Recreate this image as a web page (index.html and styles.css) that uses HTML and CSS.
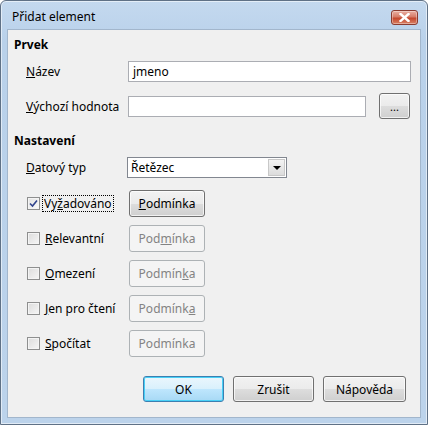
FILE: index.html
```html
<!DOCTYPE html>
<html lang="cs">
<head>
    <meta charset="UTF-8">
    <title>Přidat element</title>
    <link rel="stylesheet" href="styles.css">
</head>
<body>
    <div class="window">
        <div class="titlebar">
            <span class="title">Přidat element</span>
            <span class="close">
                <svg width="11" height="9" viewBox="0 0 11 9">
                    <path d="M1.5 1 L9.5 8 M9.5 1 L1.5 8" stroke="#fff" stroke-width="2.4" stroke-linecap="square"/>
                </svg>
            </span>
        </div>

        <div class="client">
            <div class="section">Prvek</div>
            <div class="row first">
                <label class="lbl"><u>N</u>ázev</label>
                <div class="field wide">jmeno</div>
            </div>
            <div class="row">
                <label class="lbl"><u>V</u>ýchozí hodnota</label>
                <div class="field mid"></div>
                <button class="btn dots">...</button>
            </div>

            <div class="section second">Nastavení</div>
            <div class="row type">
                <label class="lbl"><u>D</u>atový typ</label>
                <div class="select">
                    <span class="value">Řetězec</span>
                    <span class="arrow"></span>
                </div>
            </div>

            <div class="row check">
                <div class="chk-col">
                    <span class="box checked">
                        <svg width="9" height="9" viewBox="0 0 9 9">
                            <path d="M1 4.5 L3.5 7 L8 1.5" fill="none" stroke="#31448d" stroke-width="1.6"/>
                        </svg>
                    </span>
                    <span class="focus">Vy<u>ž</u>adováno</span>
                </div>
                <button class="btn cond"><u>P</u>odmínka</button>
            </div>
            <div class="row check">
                <div class="chk-col">
                    <span class="box"></span>
                    <span class="txt"><u>R</u>elevantní</span>
                </div>
                <button class="btn cond off">Pod<u>m</u>ínka</button>
            </div>
            <div class="row check">
                <div class="chk-col">
                    <span class="box"></span>
                    <span class="txt"><u>O</u>mezení</span>
                </div>
                <button class="btn cond off">Podmín<u>k</u>a</button>
            </div>
            <div class="row check">
                <div class="chk-col">
                    <span class="box"></span>
                    <span class="txt"><u>J</u>en pro čtení</span>
                </div>
                <button class="btn cond off">Podmínk<u>a</u></button>
            </div>
            <div class="row check">
                <div class="chk-col">
                    <span class="box"></span>
                    <span class="txt"><u>S</u>počítat</span>
                </div>
                <button class="btn cond off">Podmínka</button>
            </div>

            <div class="actions">
                <button class="btn action default">OK</button>
                <button class="btn action">Zrušit</button>
                <button class="btn action">Nápověda</button>
            </div>
        </div>
    </div>
</body>
</html>
```

FILE: styles.css
```css
html, body {
    margin: 0;
    padding: 0;
    background: #ffffff;
}
body {
    font: 12px "Noto Sans", "Open Sans", sans-serif;
    color: #000;
}
.window {
    width: 426px;
    height: 423px;
    border: 1px solid #5f7186;
    border-radius: 6px 6px 0 0;
    background: linear-gradient(#c4d9ef, #b9d1ea 40px, #bcd3eb);
    display: flex;
    flex-direction: column;
    box-shadow: inset 0 0 0 1px rgba(255, 255, 255, 0.55);
}
.titlebar {
    height: 28px;
    display: flex;
    align-items: flex-start;
    justify-content: space-between;
    padding: 0 9px 0 11px;
}
.title {
    margin-top: 7px;
    font-size: 12px;
    color: #000;
}
.close {
    width: 25px;
    height: 13px;
    margin-top: 9px;
    border: 1px solid #8a3b30;
    border-radius: 3px;
    background: linear-gradient(#eab0a3, #d67c68 45%, #c4472d 55%, #d98266);
    display: flex;
    align-items: center;
    justify-content: center;
    box-shadow: inset 0 0 0 1px rgba(255, 255, 255, 0.35);
}
.client {
    flex: 1;
    margin: 0 6px 6px 6px;
    border: 1px solid #a2b6cc;
    background: #f0f0f0;
    padding: 7px 0 0 6px;
}
.section {
    font-weight: bold;
    height: 16px;
    line-height: 16px;
}
.section.second {
    margin-top: 14px;
}
.row {
    display: flex;
    align-items: center;
    padding-left: 12px;
    height: 26px;
    margin-top: 12px;
}
.row.first {
    margin-top: 8px;
    height: 20px;
}
.lbl {
    width: 102px;
}
.field {
    height: 19px;
    border: 1px solid #abadb3;
    background: #fff;
    padding-left: 4px;
    line-height: 19px;
}
.field.wide {
    width: 277px;
}
.field.mid {
    width: 232px;
}
.btn {
    font: inherit;
    color: #000;
    border: 1px solid #707070;
    border-radius: 3px;
    background: linear-gradient(#f2f2f2, #ebebeb 50%, #dddddd 51%, #cfcfcf);
    box-shadow: inset 0 0 0 1px rgba(255, 255, 255, 0.7);
    padding: 0;
    cursor: default;
}
.btn.dots {
    width: 31px;
    height: 26px;
    margin-left: 13px;
    font-size: 11px;
    line-height: 1;
}
.row.type {
    margin-top: 8px;
    height: 21px;
}
.select {
    width: 158px;
    height: 19px;
    margin-left: -1px;
    border: 1px solid #828790;
    background: #fff;
    display: flex;
    align-items: stretch;
    justify-content: space-between;
}
.select .value {
    padding-left: 3px;
    line-height: 19px;
}
.arrow {
    width: 15px;
    margin: 1px;
    background: linear-gradient(#f3f3f3, #dcdcdc);
    border: 1px solid #c8c8c8;
    position: relative;
}
.arrow::after {
    content: "";
    position: absolute;
    left: 4px;
    top: 6px;
    border-left: 4px solid transparent;
    border-right: 4px solid transparent;
    border-top: 4px solid #000;
}
.row.check {
    height: 27px;
    margin-top: 12px;
}
.row.check + .row.check {
    margin-top: 8px;
}
.chk-col {
    width: 102px;
    display: flex;
    align-items: center;
    margin-left: 1px;
}
.box {
    width: 11px;
    height: 11px;
    border: 1px solid #8e8f8f;
    background: linear-gradient(135deg, #dcdcdc, #f6f6f6);
    box-shadow: inset 0 0 0 1px #f4f4f4;
    display: flex;
    align-items: center;
    justify-content: center;
    margin-right: 3px;
}
.box.checked {
    background: linear-gradient(135deg, #e2e2e2, #fbfbfb);
}
.focus {
    outline: 1px dotted #000;
    padding: 0 1px;
    line-height: 15px;
}
.txt {
    padding-left: 2px;
}
.btn.cond {
    width: 76px;
    height: 27px;
}
.btn.off {
    color: #838383;
    border-color: #adb2b5;
    background: #f4f4f4;
    box-shadow: none;
}
.actions {
    display: flex;
    justify-content: flex-end;
    gap: 9px;
    margin-top: 19px;
    padding-right: 14px;
}
.btn.action {
    width: 81px;
    height: 26px;
}
.btn.action:last-child {
    width: 83px;
}
.btn.default {
    border-color: #3c7fb1;
    box-shadow: inset 0 0 0 1px #48d0f6;
    background: linear-gradient(#eaf6fd, #d9f0fc 50%, #bee6fd 51%, #a7d9f5);
}
```
